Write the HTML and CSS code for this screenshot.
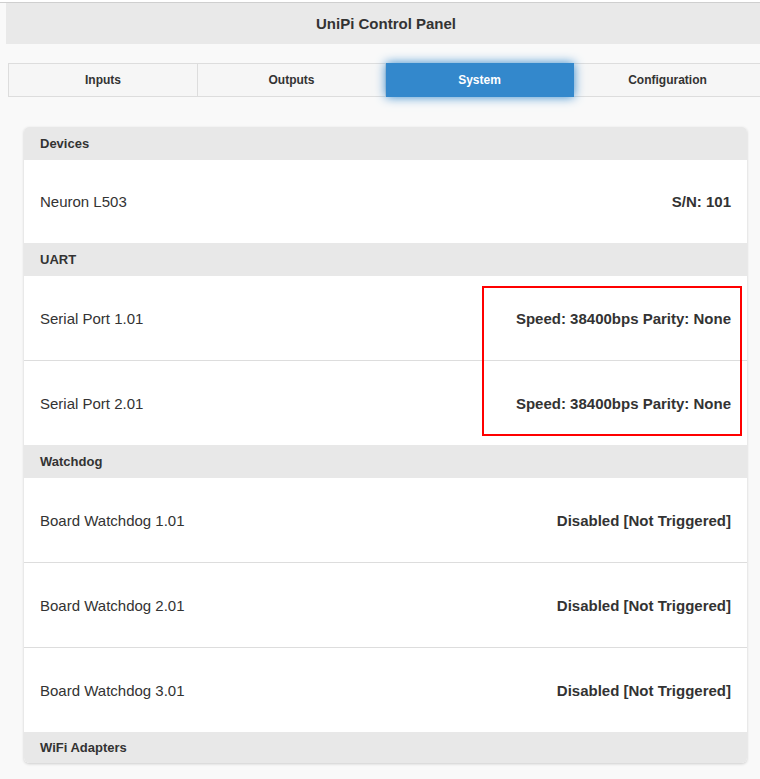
FILE: index.html
```html
<!DOCTYPE html>
<html>
<head>
<meta charset="utf-8">
<link rel="stylesheet" href="styles.css">
</head>
<body>
<div class="page">
  <div class="topline"></div>
  <header class="header"><h1 class="title">UniPi Control Panel</h1></header>
  <nav class="navbar">
    <div class="tab">Inputs</div>
    <div class="tab">Outputs</div>
    <div class="tab active">System</div>
    <div class="tab">Configuration</div>
  </nav>
  <div class="content">
    <div class="card">
      <div class="group">Devices</div>
      <div class="row first device"><span class="name">Neuron L503</span><span class="value">S/N: 101</span></div>
      <div class="group">UART</div>
      <div class="row first"><span class="name">Serial Port 1.01</span><span class="value">Speed: 38400bps Parity: None</span></div>
      <div class="row"><span class="name">Serial Port 2.01</span><span class="value">Speed: 38400bps Parity: None</span></div>
      <div class="group">Watchdog</div>
      <div class="row first"><span class="name">Board Watchdog 1.01</span><span class="value">Disabled [Not Triggered]</span></div>
      <div class="row"><span class="name">Board Watchdog 2.01</span><span class="value">Disabled [Not Triggered]</span></div>
      <div class="row"><span class="name">Board Watchdog 3.01</span><span class="value">Disabled [Not Triggered]</span></div>
      <div class="group last">WiFi Adapters</div>
    </div>
  </div>
  <div class="highlight"></div>
</div>
</body>
</html>
```

FILE: styles.css
```css
html, body {
  margin: 0;
  padding: 0;
}
body {
  background: #f9f9f9;
  font-family: "Liberation Sans", Arial, Helvetica, sans-serif;
  color: #333;
  overflow: hidden;
  width: 760px;
  height: 779px;
}
.page {
  position: relative;
  width: 760px;
  height: 779px;
  overflow: hidden;
}
.topline {
  height: 2px;
  background: #ffffff;
  border-bottom: 1px solid #cfcfcf;
}
.header {
  margin-left: 6px;
  width: 760px;
  height: 41px;
  background: #e9e9e9;
  display: flex;
  align-items: center;
  justify-content: center;
}
.title {
  margin: 0;
  font-size: 15px;
  font-weight: bold;
  color: #333;
}
.navbar {
  display: flex;
  margin: 19px 0 0 8px;
  width: 760px;
}
.tab {
  flex: none;
  width: 188px;
  height: 34px;
  box-sizing: border-box;
  background: #f6f6f6;
  border: 1px solid #dddddd;
  border-left-width: 0;
  display: flex;
  align-items: center;
  justify-content: center;
  font-size: 12px;
  font-weight: bold;
  color: #333;
}
.tab:first-child {
  width: 190px;
  border-left-width: 1px;
}
.tab.active {
  background: #3388cc;
  border-color: #3388cc;
  color: #ffffff;
  box-shadow: 0 0 10px #3388cc;
  position: relative;
  z-index: 1;
}
.content {
  padding: 30px 0 0 24px;
}
.card {
  width: 723px;
  background: #ffffff;
  border-radius: 5px;
  overflow: hidden;
  box-shadow: 0 1px 3px rgba(0, 0, 0, 0.18);
}
.group {
  height: 33px;
  box-sizing: border-box;
  background: #e8e8e8;
  padding: 0 16px;
  display: flex;
  align-items: center;
  font-size: 13px;
  font-weight: bold;
  color: #333;
}
.group.last {
  height: 31px;
}
.row {
  height: 85px;
  box-sizing: border-box;
  border-top: 1px solid #dddddd;
  padding: 0 16px;
  display: flex;
  align-items: center;
  justify-content: space-between;
  font-size: 15px;
}
.row.first {
  height: 84px;
  border-top: none;
}
.row.device {
  height: 83px;
}
.name {
  color: #333;
}
.value {
  font-weight: bold;
  color: #333;
}
.highlight {
  position: absolute;
  left: 482px;
  top: 286px;
  width: 260px;
  height: 150px;
  box-sizing: border-box;
  border: 2px solid #ff0000;
}
```
